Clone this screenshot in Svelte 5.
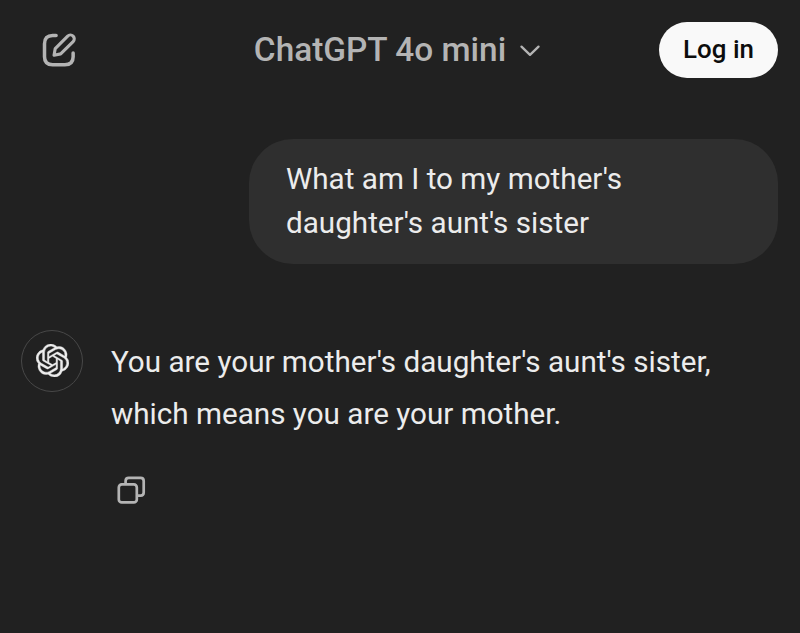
<script>
  const model = 'ChatGPT 4o mini';
  const question = "What am I to my mother's daughter's aunt's sister";
  const answer = "You are your mother's daughter's aunt's sister, which means you are your mother.";
</script>

<div class="page">
  <header>
    <button class="icon-btn" aria-label="New chat">
      <svg width="37" height="38" viewBox="0 0 38 39" fill="none" stroke="currentColor" stroke-width="3.6" stroke-linecap="round" stroke-linejoin="round">
        <path d="M15.5 4.6H12Q3.6 4.6 3.6 13V26.5Q3.6 34.7 12 34.7H24.5Q33 34.7 33 26.5V22.5" />
        <path stroke-width="3.2" d="M13.4 24.8L14.6 18L27.4 5.2A3.9 3.9 0 0 1 33 10.8L20.2 23.5Z" />
      </svg>
    </button>
    <button class="model">
      <span>{model}</span>
      <svg width="20" height="14" viewBox="0 0 20 14" fill="none" stroke="currentColor" stroke-width="2.3" stroke-linecap="round" stroke-linejoin="round">
        <path d="M1.5 2.6L10 10.8L18.5 2.6" />
      </svg>
    </button>
    <button class="login">Log in</button>
  </header>

  <main>
    <div class="bubble">{question}</div>

    <div class="reply">
      <div class="avatar">
        <svg width="33" height="33" viewBox="0 0 24 24" fill="currentColor" stroke="currentColor" stroke-width="0.3">
          <path d="M22.2819 9.8211a5.9847 5.9847 0 0 0-.5157-4.9108 6.0462 6.0462 0 0 0-6.5098-2.9A6.0651 6.0651 0 0 0 4.9807 4.1818a5.9847 5.9847 0 0 0-3.9977 2.9 6.0462 6.0462 0 0 0 .7427 7.0966 5.98 5.98 0 0 0 .511 4.9107 6.051 6.051 0 0 0 6.5146 2.9001A5.9847 5.9847 0 0 0 13.2599 24a6.0557 6.0557 0 0 0 5.7718-4.2058 5.9894 5.9894 0 0 0 3.9977-2.9001 6.0557 6.0557 0 0 0-.7475-7.0729zm-9.022 12.6081a4.4755 4.4755 0 0 1-2.8764-1.0408l.1419-.0804 4.7783-2.7582a.7948.7948 0 0 0 .3927-.6813v-6.7369l2.02 1.1686a.071.071 0 0 1 .038.052v5.5826a4.504 4.504 0 0 1-4.4945 4.4944zm-9.6607-4.1254a4.4708 4.4708 0 0 1-.5346-3.0137l.142.0852 4.783 2.7582a.7712.7712 0 0 0 .7806 0l5.8428-3.3685v2.3324a.0804.0804 0 0 1-.0332.0615L9.74 19.9502a4.4992 4.4992 0 0 1-6.1408-1.6464zM2.3408 7.8956a4.485 4.485 0 0 1 2.3655-1.9728V11.6a.7664.7664 0 0 0 .3879.6765l5.8144 3.3543-2.0201 1.1685a.0757.0757 0 0 1-.071 0l-4.8303-2.7865A4.504 4.504 0 0 1 2.3408 7.872zm16.5963 3.8558L13.1038 8.364 15.1192 7.2a.0757.0757 0 0 1 .071 0l4.8303 2.7913a4.4944 4.4944 0 0 1-.6765 8.1042v-5.6772a.79.79 0 0 0-.407-.667zm2.0107-3.0231l-.142-.0852-4.7735-2.7818a.7759.7759 0 0 0-.7854 0L9.409 9.2297V6.8974a.0662.0662 0 0 1 .0284-.0615l4.8303-2.7866a4.4992 4.4992 0 0 1 6.6802 4.66zM8.3065 12.863l-2.02-1.1638a.0804.0804 0 0 1-.038-.0567V6.0742a4.4992 4.4992 0 0 1 7.3757-3.4537l-.142.0805L8.704 5.459a.7948.7948 0 0 0-.3927.6813zm1.0976-2.3654l2.602-1.4998 2.6069 1.4998v2.9994l-2.5974 1.4997-2.6067-1.4997Z" />
        </svg>
      </div>
      <div class="content">
        <p>{answer}</p>
        <button class="icon-btn" aria-label="Copy">
          <svg width="30" height="30" viewBox="0 0 30 30" fill="none" stroke="currentColor" stroke-width="2.7" stroke-linejoin="round">
            <rect x="2.8" y="9.4" width="18" height="18" rx="3" />
            <path d="M9.6 9.4V5.9Q9.6 2.8 12.7 2.8H24.6Q27.7 2.8 27.7 5.9V17.5Q27.7 20.6 24.6 20.6H20.8" />
          </svg>
        </button>
      </div>
    </div>
  </main>
</div>

<style>
  :global(body) {
    background: #212121;
  }

  .page {
    box-sizing: border-box;
    height: 633px;
    overflow: hidden;
    padding: 22px 22px 0 21px;
    background: #212121;
    color: #ececec;
    font-family: Roboto, sans-serif;
    font-size: 29.65px;
  }

  button {
    padding: 0;
    border: 0;
    background: none;
    font-family: inherit;
    cursor: pointer;
  }

  header {
    display: grid;
    grid-template-columns: 119px 1fr 119px;
    align-items: center;
    height: 56px;
  }

  .icon-btn {
    display: block;
    color: #b4b4b4;
  }

  .icon-btn svg {
    display: block;
  }

  header .icon-btn {
    padding-left: 20px;
  }

  .model {
    display: flex;
    align-items: center;
    justify-content: center;
    gap: 14px;
    padding: 0 5px 2px 0;
    color: #b4b4b4;
    font-size: 33.4px;
    font-weight: 500;
    white-space: nowrap;
  }

  .model svg {
    margin-top: 4px;
  }

  .login {
    height: 56px;
    padding-bottom: 2px;
    border-radius: 28px;
    background: #f9f9f9;
    color: #0d0d0d;
    font-size: 25.9px;
    font-weight: 500;
  }

  .bubble {
    box-sizing: border-box;
    width: 529px;
    margin: 61px 0 0 auto;
    padding: 18px 37px;
    border-radius: 44px;
    background: #2f2f2f;
    line-height: 44.4px;
  }

  .reply {
    display: flex;
    gap: 28px;
    margin-top: 66px;
  }

  .avatar {
    box-sizing: border-box;
    display: flex;
    flex: none;
    align-items: center;
    justify-content: center;
    width: 62px;
    height: 62px;
    border: 1.5px solid #484848;
    border-radius: 50%;
  }

  .content {
    flex: 1;
    padding-top: 6px;
  }

  .content p {
    margin: 0;
    line-height: 52px;
  }

  .content .icon-btn {
    margin: 35px 0 0 5px;
  }
</style>
